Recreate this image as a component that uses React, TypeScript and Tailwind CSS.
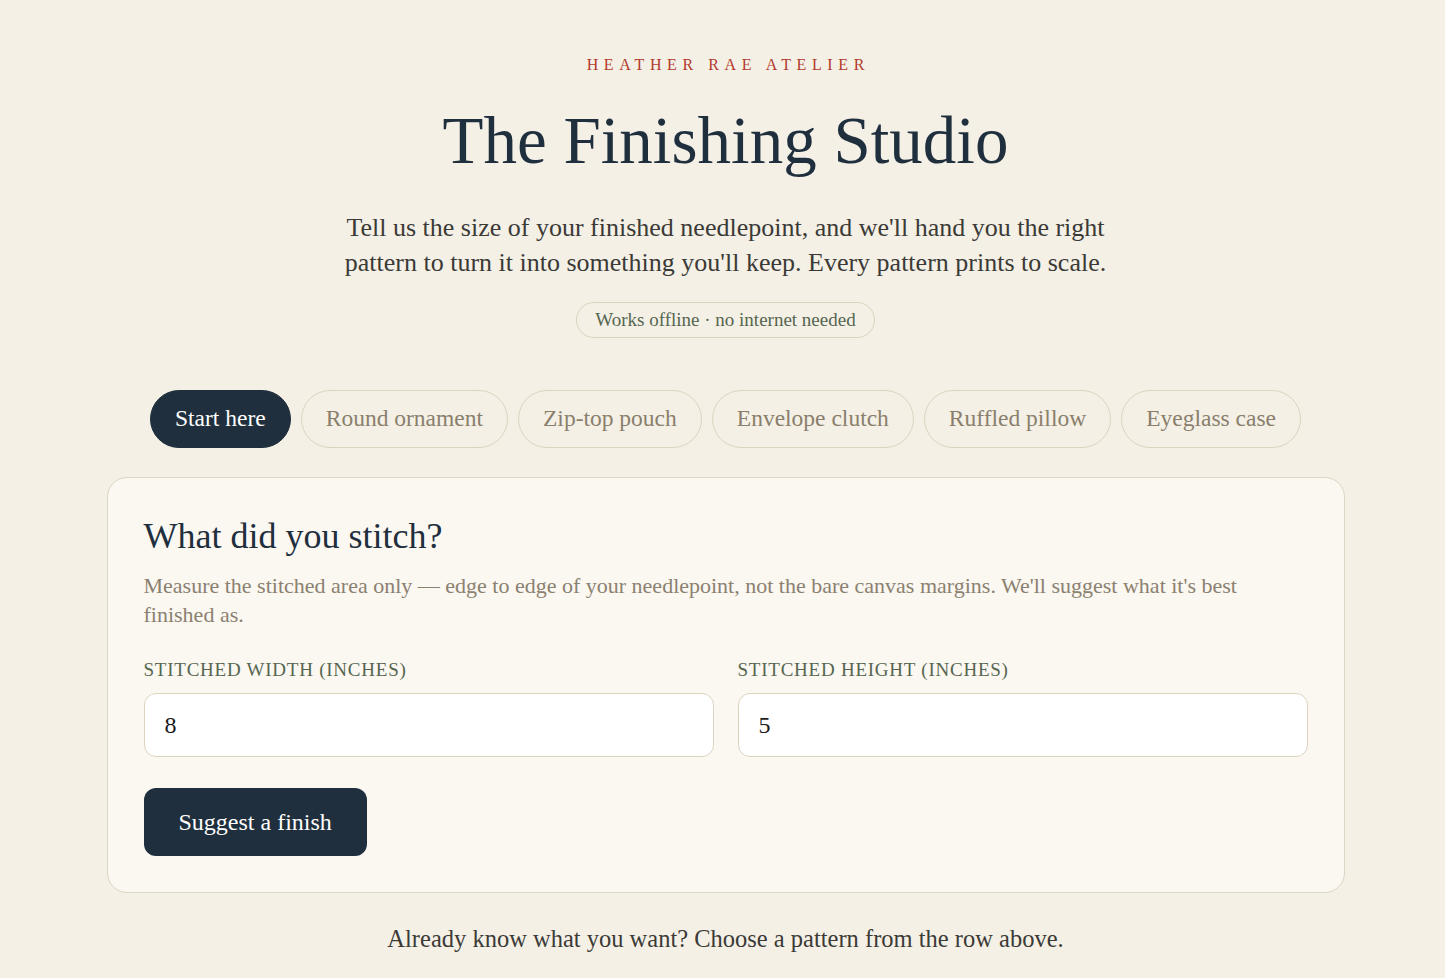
import React, { useState } from 'react';

const tabs = ['Start here', 'Round ornament', 'Zip-top pouch', 'Envelope clutch', 'Ruffled pillow', 'Eyeglass case'];

export default function App() {
  const [active, setActive] = useState(0);
  const [width, setWidth] = useState('8');
  const [height, setHeight] = useState('5');

  return (
    <div className="min-h-screen bg-[#f4f0e6] pl-[6px] pb-10 text-[#1f2f3d] font-['Liberation_Serif',serif]">
      <header className="flex flex-col items-center pt-[55px] text-center">
        <p className="pl-[0.35em] text-[16px] leading-[20px] uppercase tracking-[0.35em] text-[#b3392b]">Heather Rae Atelier</p>
        <h1 className="mt-[30px] text-[67px] leading-[70px] text-[#1f2f3d]">The Finishing Studio</h1>
        <p className="mt-[35px] max-w-[800px] text-[26px] leading-[35px] text-[#3b3a36]">
          Tell us the size of your finished needlepoint, and we'll hand you the right pattern to turn it into something you'll keep. Every pattern prints to scale.
        </p>
        <span className="mt-[22px] flex h-[36px] items-center rounded-full border border-[#dcd3bd] px-[18px] text-[19px] text-[#566650]">
          Works offline · no internet needed
        </span>
      </header>

      <nav className="mt-[52px] flex justify-center gap-[10px]">
        {tabs.map((t, i) => (
          <button
            key={t}
            onClick={() => setActive(i)}
            className={
              i === active
                ? 'h-[58px] rounded-full border border-[#1f2f3d] bg-[#1f2f3d] px-[24px] text-[23.5px] text-white'
                : 'h-[58px] rounded-full border border-[#ddd4c0] px-[24px] text-[23.5px] text-[#8a7f6c]'
            }
          >
            {t}
          </button>
        ))}
      </nav>

      <section className="mx-auto mt-[29px] w-[1238px] rounded-[20px] border border-[#ddd5c3] bg-[#fbf7f1] px-[36px] pt-[37px] pb-[36px]">
        <h2 className="text-[36px] leading-[42px] text-[#1f2f3d]">What did you stitch?</h2>
        <p className="mt-[14px] text-[22px] leading-[29px] text-[#8b8170]">
          Measure the stitched area only — edge to edge of your needlepoint, not the bare canvas margins. We'll suggest what it's best finished as.
        </p>
        <div className="mt-[29px] grid grid-cols-2 gap-[24px]">
          <label className="flex flex-col">
            <span className="text-[19px] leading-[24px] uppercase tracking-[0.04em] text-[#566650]">Stitched width (inches)</span>
            <input
              value={width}
              onChange={(e) => setWidth(e.target.value)}
              className="mt-[11px] h-[64px] rounded-[12px] border border-[#ddd4c0] bg-white px-[20px] text-[24px] text-[#1a1a1a] outline-none"
            />
          </label>
          <label className="flex flex-col">
            <span className="text-[19px] leading-[24px] uppercase tracking-[0.04em] text-[#566650]">Stitched height (inches)</span>
            <input
              value={height}
              onChange={(e) => setHeight(e.target.value)}
              className="mt-[11px] h-[64px] rounded-[12px] border border-[#ddd4c0] bg-white px-[20px] text-[24px] text-[#1a1a1a] outline-none"
            />
          </label>
        </div>
        <button className="mt-[31px] h-[68px] rounded-[12px] bg-[#1f2f3d] px-[35px] text-[24px] text-white">Suggest a finish</button>
      </section>

      <p className="mt-[31px] text-center text-[24.5px] leading-[30px] text-[#3b3a36]">
        Already know what you want? Choose a pattern from the row above.
      </p>
    </div>
  );
}
